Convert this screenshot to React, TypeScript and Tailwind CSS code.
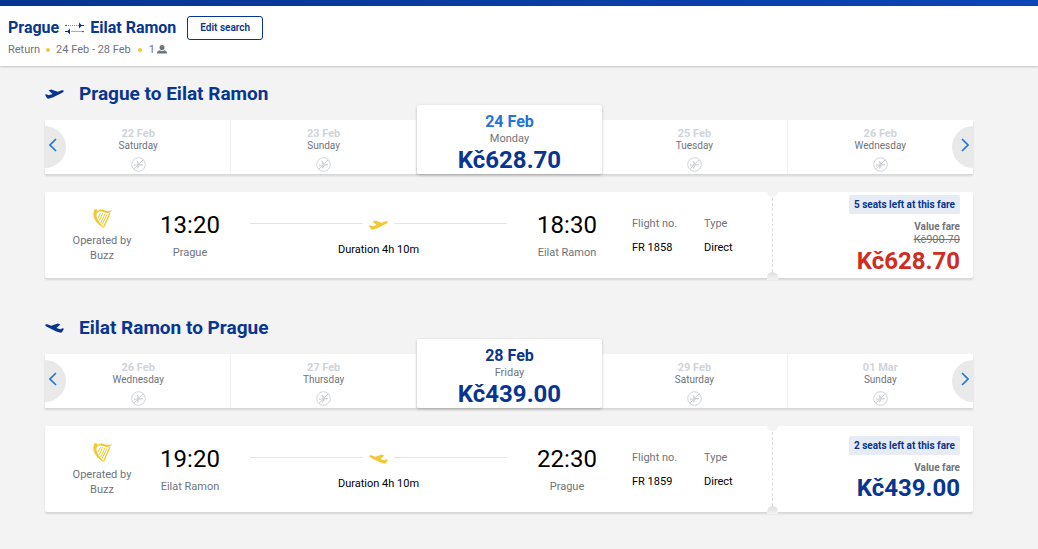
import { clsx } from 'clsx';

interface DayProps {
  date: string;
  weekday: string;
  price?: string;
  highlighted?: boolean;
}

interface FlightProps {
  departure: string;
  arrival: string;
  from: string;
  to: string;
  number: string;
  seats: string;
  price: string;
  oldPrice?: string;
}

interface JourneyProps {
  title: string;
  inbound?: boolean;
  days: DayProps[];
  flight: FlightProps;
}

const journeys: JourneyProps[] = [
  {
    title: 'Prague to Eilat Ramon',
    days: [
      { date: '22 Feb', weekday: 'Saturday' },
      { date: '23 Feb', weekday: 'Sunday' },
      { date: '24 Feb', weekday: 'Monday', price: 'Kč628.70', highlighted: true },
      { date: '25 Feb', weekday: 'Tuesday' },
      { date: '26 Feb', weekday: 'Wednesday' },
    ],
    flight: {
      departure: '13:20',
      arrival: '18:30',
      from: 'Prague',
      to: 'Eilat Ramon',
      number: 'FR 1858',
      seats: '5 seats left at this fare',
      price: 'Kč628.70',
      oldPrice: 'Kč900.70',
    },
  },
  {
    title: 'Eilat Ramon to Prague',
    inbound: true,
    days: [
      { date: '26 Feb', weekday: 'Wednesday' },
      { date: '27 Feb', weekday: 'Thursday' },
      { date: '28 Feb', weekday: 'Friday', price: 'Kč439.00' },
      { date: '29 Feb', weekday: 'Saturday' },
      { date: '01 Mar', weekday: 'Sunday' },
    ],
    flight: {
      departure: '19:20',
      arrival: '22:30',
      from: 'Eilat Ramon',
      to: 'Prague',
      number: 'FR 1859',
      seats: '2 seats left at this fare',
      price: 'Kč439.00',
    },
  },
];

const PlaneIcon = ({ inbound, className }: { inbound?: boolean; className?: string }) => (
  <svg
    viewBox="0 0 58 30"
    fill="currentColor"
    aria-hidden="true"
    className={clsx('h-[10px] w-[19px]', inbound && '-scale-x-100', className)}
  >
    <path d="M0 17l5-1 6 3 12-4L11 4l8-3 20 7 10-4c5-1 8-1 8 2s-2 4-6 6L25 25l-12 4c-5 1-7 0-8-3z" />
  </svg>
);

const RouteIcon = () => (
  <svg viewBox="0 0 19 13" fill="none" stroke="#073590" aria-hidden="true" className="h-[13px] w-[19px]">
    <path d="M1 3.500h13" strokeDasharray="1 1" opacity=".6" />
    <path d="M6 9.500h12" opacity=".4" />
    <path d="M14 3.500h5M0 9.500h5" />
    <path d="M14 .5l3 3-3 3zM5 6.500l-3 3 3 3z" fill="#073590" stroke="none" />
    <circle cx="1" cy="3.500" r=".8" fill="#073590" stroke="none" />
    <circle cx="18" cy="9.500" r=".8" fill="#073590" stroke="none" />
  </svg>
);

const PersonIcon = () => (
  <svg viewBox="0 0 10 9" fill="currentColor" aria-hidden="true" className="mb-px h-[9px] w-[10px]">
    <path d="M5 0c1.600 0 2.500 1.100 2.500 2.500S6.500 5.300 5 5.300 2.500 3.900 2.500 2.500 3.400 0 5 0zM0 8.500c0-2 .8-2.800 2.800-3.200.7.600 1.400.8 2.200.8s1.500-.2 2.200-.8C9.200 5.700 10 6.500 10 8.500z" />
  </svg>
);

const NoFlightIcon = () => (
  <svg viewBox="0 0 15 15" fill="none" stroke="currentColor" aria-hidden="true" className="size-[15px]">
    <circle cx="7.500" cy="7.500" r="6.800" />
    <path
      d="M3.200 6.500l1.300 1.200 2.100-.2-1-3.500h1.100l2 3.300 2.800-.2c.8 0 .8 1.200 0 1.300l-2.800.1-1.700 3.100H5.800l.8-3-2.100.1-1.200.8z"
      fill="currentColor"
      stroke="none"
    />
    <path d="M2.800 12.200l9.400-9.400" />
  </svg>
);

const HarpIcon = () => (
  <svg viewBox="0 0 57 57" fill="none" stroke="currentColor" aria-hidden="true" className="size-[19px]">
    <path
      d="M6 1c4-1 7 1 8 5 8-6 16-5 24-1 6 2 12 1 19-1-2 5-6 7-12 8-12 1-19-8-29-3-5 2-7 7-5 14 3 12 11 20 20 31l1 3C19 48 7 39 3 26 1 20 2 15 0 12l3-2c-2-3-1-7 3-9z"
      fill="currentColor"
      stroke="none"
    />
    <path d="M22 13l-7 14M29 12l-10 23M36 15L23 42M42 16L27 47" strokeWidth="3" />
    <path d="M51 12L32 55" strokeWidth="4" />
  </svg>
);

const ArrowButton = ({ next }: { next?: boolean }) => (
  <button
    type="button"
    aria-label={next ? 'Next dates' : 'Previous dates'}
    className={clsx(
      'absolute top-[6px] flex h-[42px] w-[21px] items-center bg-[#e9e9e9] px-[4px] text-[#2075db]',
      next ? 'right-0 justify-end rounded-l-full' : 'left-0 rounded-r-full',
    )}
  >
    <svg viewBox="0 0 8 14" fill="none" stroke="currentColor" strokeWidth="1.600" className="mb-1 h-[14px] w-[8px]">
      <path d={next ? 'M1 1l6 6-6 6' : 'M7 1L1 7l6 6'} />
    </svg>
  </button>
);

const Day = ({ date, weekday, price, highlighted }: DayProps) => {
  if (price) {
    return (
      <li className="-mt-[15px] rounded-xs bg-white shadow-[0_1px_3px_rgba(0,0,0,0.25)]">
        <button type="button" className="flex h-[69px] w-full flex-col items-center pt-[8px]">
          <span
            className={clsx(
              'text-[16px] leading-[18px] font-bold',
              highlighted ? 'text-[#2075db]' : 'text-[#073590]',
            )}
          >
            {date}
          </span>
          <span className="text-[11px] leading-[16px] text-[#6f747b]">{weekday}</span>
          <span className="text-[24px] leading-[26px] font-bold text-[#073590]">{price}</span>
        </button>
      </li>
    );
  }

  return (
    <li className="border-r border-[#f1f1f1] last:border-r-0">
      <button type="button" className="flex h-[54px] w-full flex-col items-center pt-[7px] text-[#d0d4d9]">
        <span className="text-[11px] leading-[13px] font-bold">{date}</span>
        <span className="text-[10px] leading-[12px] text-[#6f747b]">{weekday}</span>
        <span className="mt-[5px]">
          <NoFlightIcon />
        </span>
      </button>
    </li>
  );
};

const Stop = ({ time, city }: { time: string; city: string }) => (
  <div className="flex w-[90px] shrink-0 flex-col items-center">
    <span className="text-[24px] leading-[28px] text-black">{time}</span>
    <span className="mt-[6px] leading-[16px]">{city}</span>
  </div>
);

const FlightCard = ({ flight, inbound }: { flight: FlightProps; inbound?: boolean }) => (
  <article className="mt-[18px] flex h-[86px] rounded-xs bg-white text-[11px] text-[#6f747b] shadow-[0_2px_2px_rgba(0,0,0,0.12)]">
    <div className="flex flex-1 pl-[24px]">
      <div className="flex w-[66px] flex-col items-center pt-[17px] text-center">
        <span className="text-[#f1c933]">
          <HarpIcon />
        </span>
        <p className="mt-[5px] leading-[15px]">Operated by Buzz</p>
      </div>
      <div className="flex flex-1 pt-[19px] pl-[10px]">
        <Stop time={flight.departure} city={flight.from} />
        <div className="flex-1 px-[15px] pt-[8px]">
          <div className="flex items-start gap-[6px] text-[#f1c933]">
            <span className="mt-[4px] h-px flex-1 bg-[#e3e3e3]" />
            <PlaneIcon inbound={inbound} className="mt-[1px]" />
            <span className="mt-[4px] h-px flex-1 bg-[#e3e3e3]" />
          </div>
          <p className="mt-[12px] text-center leading-[16px] text-black">Duration 4h 10m</p>
        </div>
        <Stop time={flight.arrival} city={flight.to} />
      </div>
      <dl className="flex pt-[24px] pl-[20px] leading-[16px]">
        <div className="w-[72px]">
          <dt>Flight no.</dt>
          <dd className="mt-[8px] text-black">{flight.number}</dd>
        </div>
        <div className="w-[68px]">
          <dt>Type</dt>
          <dd className="mt-[8px] text-black">Direct</dd>
        </div>
      </dl>
    </div>
    <div className="relative flex w-[201px] flex-col items-end justify-center pr-[13px]">
      <span className="absolute top-[6px] bottom-[6px] left-0 border-l border-dashed border-[#dcdcdc]" />
      <span className="absolute -top-px -left-[5px] h-[6px] w-[11px] rounded-b-full bg-[#f3f3f3]" />
      <span className="absolute -bottom-[2px] -left-[5px] h-[8px] w-[11px] rounded-t-full bg-linear-to-b from-[#dedede] to-[#f3f3f3]" />
      <span className="rounded-xs bg-[#e6ebf4] px-[5px] text-[10px] leading-[19px] font-bold text-[#073590]">
        {flight.seats}
      </span>
      <span className="mt-[7px] text-[10px] leading-[12px] font-bold">Value fare</span>
      {flight.oldPrice && <s className="leading-[14px]">{flight.oldPrice}</s>}
      <span
        className={clsx(
          'text-[24px] leading-[28px] font-bold',
          flight.oldPrice ? 'text-[#d02c20]' : 'text-[#073590]',
        )}
      >
        {flight.price}
      </span>
    </div>
  </article>
);

const Journey = ({ title, inbound, days, flight }: JourneyProps) => (
  <section>
    <h2 className="flex items-center text-[19px] leading-[24px] font-bold text-[#073590]">
      <PlaneIcon inbound={inbound} className="mr-[15px]" />
      {title}
    </h2>
    <div className="relative mt-[14px] bg-white pl-px shadow-[0_2px_2px_rgba(0,0,0,0.12)]">
      <ul className="grid grid-cols-5">
        {days.map((day) => (
          <Day key={day.date} {...day} />
        ))}
      </ul>
      <ArrowButton />
      <ArrowButton next />
    </div>
    <FlightCard flight={flight} inbound={inbound} />
  </section>
);

const App = () => (
  <div className="min-h-screen bg-[#f3f3f3] font-[Roboto,sans-serif]">
    <div className="h-[6px] bg-linear-to-r from-[#073590] to-[#0c45b5]" />
    <header className="h-[60px] bg-white px-[8px] pt-[10px] shadow-[0_1px_2px_rgba(0,0,0,0.2)]">
      <div className="flex items-center text-[16px] leading-[24px] font-bold text-[#073590]">
        <h1 className="flex items-center gap-[6px]">
          Prague
          <RouteIcon />
          Eilat Ramon
        </h1>
        <button
          type="button"
          className="ml-[11px] h-[24px] rounded-[3px] border border-[#073590] px-[12px] text-[10px] leading-[20px] font-semibold"
        >
          Edit search
        </button>
      </div>
      <p className="mt-[2px] flex items-center text-[11px] leading-[16px] text-[#6f747b]">
        Return
        <span className="mx-[6px] size-[4px] rounded-full bg-[#f1c933]" />
        24 Feb - 28 Feb
        <span className="mx-[7px] size-[4px] rounded-full bg-[#f1c933]" />
        <span className="mr-[2px]">1</span>
        <PersonIcon />
      </p>
    </header>
    <main className="flex flex-col gap-[38px] pt-[16px] pr-[65px] pb-[36px] pl-[45px]">
      {journeys.map((journey) => (
        <Journey key={journey.title} {...journey} />
      ))}
    </main>
  </div>
);

export default App;
